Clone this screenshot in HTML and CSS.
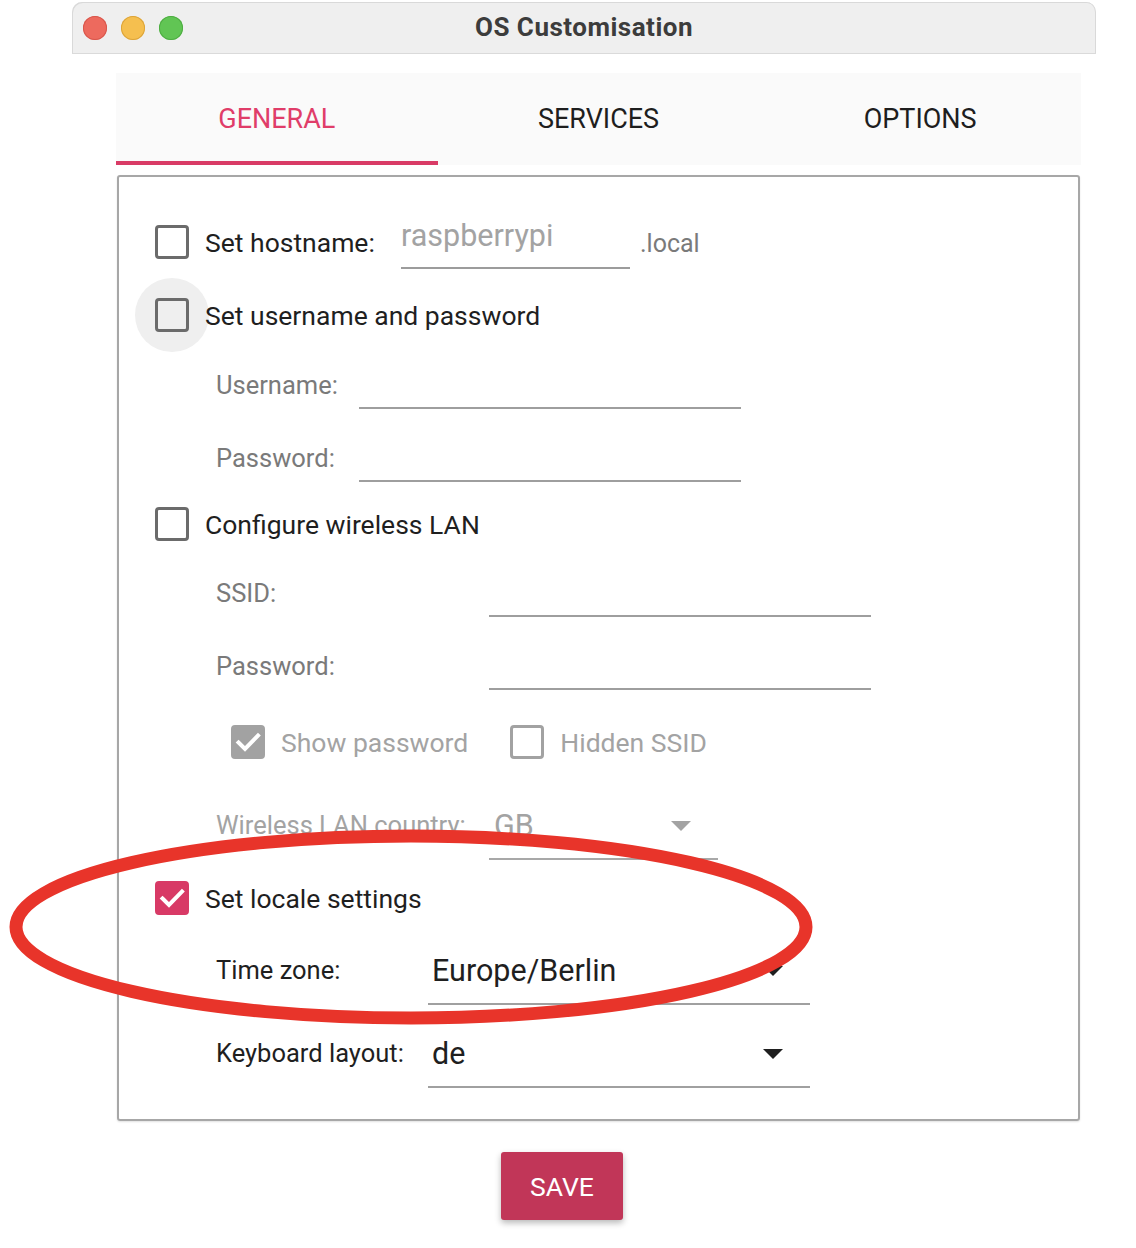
FILE: index.html
```html
<!DOCTYPE html>
<html lang="en">
<head>
<meta charset="utf-8">
<title>OS Customisation</title>
<link rel="stylesheet" href="styles.css">
</head>
<body>
<div class="window">
  <div class="titlebar">
    <div class="lights">
      <span class="light red"></span>
      <span class="light yellow"></span>
      <span class="light green"></span>
    </div>
    <div class="title">OS Customisation</div>
    <div class="spacer"></div>
  </div>

  <div class="content">
    <div class="tabs">
      <div class="tab active">GENERAL</div>
      <div class="tab">SERVICES</div>
      <div class="tab">OPTIONS</div>
    </div>

    <div class="panel">
      <div class="row host-row">
        <span class="cb"></span>
        <span class="cb-label host-label">Set hostname:</span>
        <span class="host-input"><span class="placeholder">raspberrypi</span></span>
        <span class="suffix">.local</span>
      </div>

      <div class="row check-row user-check">
        <span class="ripple"><span class="cb"></span></span>
        <span class="cb-label">Set username and password</span>
      </div>

      <div class="row field-row user-group">
        <span class="field-label">Username:</span>
        <span class="text-field wide"></span>
      </div>
      <div class="row field-row user-group">
        <span class="field-label">Password:</span>
        <span class="text-field wide"></span>
      </div>

      <div class="row check-row wifi-check">
        <span class="cb"></span>
        <span class="cb-label">Configure wireless LAN</span>
      </div>

      <div class="row field-row wifi-group">
        <span class="field-label">SSID:</span>
        <span class="text-field wide"></span>
      </div>
      <div class="row field-row wifi-group">
        <span class="field-label">Password:</span>
        <span class="text-field wide"></span>
      </div>

      <div class="row options-row">
        <span class="cb checked disabled">
          <svg viewBox="0 0 34 34" class="tick"><polyline points="7.5,17.5 14,24 27,10.5"/></svg>
        </span>
        <span class="opt-label">Show password</span>
        <span class="cb disabled-empty"></span>
        <span class="opt-label">Hidden SSID</span>
      </div>

      <div class="row combo-row wifi-group disabled-row">
        <span class="field-label">Wireless LAN country:</span>
        <span class="combo narrow">
          <span class="combo-value">GB</span>
          <span class="arrow"></span>
        </span>
      </div>

      <div class="row check-row locale-check">
        <span class="cb checked">
          <svg viewBox="0 0 34 34" class="tick"><polyline points="7.5,17.5 14,24 27,10.5"/></svg>
        </span>
        <span class="cb-label">Set locale settings</span>
      </div>

      <div class="row combo-row locale-group">
        <span class="field-label dark">Time zone:</span>
        <span class="combo wide">
          <span class="combo-value">Europe/Berlin</span>
          <span class="arrow"></span>
        </span>
      </div>
      <div class="row combo-row locale-group">
        <span class="field-label dark">Keyboard layout:</span>
        <span class="combo wide">
          <span class="combo-value">de</span>
          <span class="arrow"></span>
        </span>
      </div>
    </div>

    <div class="actions">
      <button class="save">SAVE</button>
    </div>
  </div>

  <svg class="annotation" viewBox="0 0 1136 1248" width="1136" height="1248">
    <ellipse cx="411" cy="927" rx="395" ry="91" />
  </svg>
</div>
</body>
</html>
```

FILE: styles.css
```css
* { box-sizing: border-box; }

html, body {
  margin: 0;
  padding: 0;
  background: #ffffff;
}

body {
  font-family: Roboto, "Liberation Sans", sans-serif;
  color: #212121;
  width: 1136px;
  height: 1248px;
  overflow: hidden;
  position: relative;
}

.window {
  margin: 2px 0 0 72px;
  width: 1024px;
}

/* Title bar */
.titlebar {
  height: 52px;
  background: #efefef;
  border-bottom: 1px solid #dadada;
  border-radius: 10px 10px 0 0;
  box-shadow: inset 1px 1px 0 #d9d9d9, inset -1px 0 0 #d9d9d9;
  display: grid;
  grid-template-columns: 1fr auto 1fr;
  align-items: center;
}

.lights {
  display: flex;
  gap: 14px;
  padding-left: 11px;
}

.light {
  width: 24px;
  height: 24px;
  border-radius: 50%;
  display: block;
}
.light.red { background: #ed6a5e; box-shadow: inset 0 0 0 1px #d8574c; }
.light.yellow { background: #f5bf4f; box-shadow: inset 0 0 0 1px #dca43a; }
.light.green { background: #61c554; box-shadow: inset 0 0 0 1px #4ead42; }

.title {
  font-family: Roboto, "Liberation Sans", sans-serif;
  font-weight: 700;
  font-size: 26px;
  color: #3c3c3c;
  letter-spacing: 0.5px;
  padding-bottom: 2px;
}

/* Content */
.content {
  padding: 19px 15px 0 44px;
}

.tabs {
  display: flex;
  height: 92px;
  background: #fafafa;
}

.tab {
  flex: 1;
  display: flex;
  align-items: center;
  justify-content: center;
  font-size: 27px;
  color: #1e1e1e;
  padding-top: 4px;
  border-bottom: 4px solid transparent;
}

.tab.active {
  color: #e03d69;
  border-bottom-color: #d93b66;
}

.panel {
  margin: 10px 1px 0 1px;
  border: 2px solid #a7a7a7;
  border-radius: 3px;
  box-shadow: 0 1px 2px rgba(0, 0, 0, 0.12);
  padding: 28px 0 24px 0;
}

.row {
  display: flex;
  align-items: center;
}

/* checkbox */
.cb {
  width: 34px;
  height: 34px;
  flex: 0 0 34px;
  border: 3.5px solid #6b6b6b;
  border-radius: 4px;
  display: flex;
  align-items: center;
  justify-content: center;
  background: #fff;
}

.cb.checked {
  background: #d83a66;
  border-color: #d83a66;
}

.cb.checked.disabled {
  background: #a2a2a2;
  border-color: #a2a2a2;
}

.cb.disabled-empty {
  border-color: #a2a2a2;
}

.tick {
  width: 34px;
  height: 34px;
  flex: 0 0 34px;
  margin: -3.5px;
}
.tick polyline {
  fill: none;
  stroke: #ffffff;
  stroke-width: 4;
  stroke-linecap: square;
}

.ripple {
  width: 74px;
  height: 74px;
  margin: -20px;
  border-radius: 50%;
  background: #efefef;
  display: flex;
  align-items: center;
  justify-content: center;
}
.ripple .cb { background: transparent; }

.cb-label {
  font-size: 26.5px;
  color: #1f1f1f;
  margin-left: 16px;
}

/* hostname */
.host-row {
  height: 74px;
  padding-left: 36px;
}

.host-label {
  width: 196px;
}

.host-input {
  align-self: flex-start;
  width: 229px;
  height: 64px;
  border-bottom: 2px solid #9c9c9c;
  display: flex;
  align-items: center;
  padding-bottom: 2px;
}

.placeholder {
  font-size: 30.5px;
  color: #a3a3a3;
}

.suffix {
  margin-left: 10px;
  font-size: 25px;
  color: #7a7a7a;
  padding-top: 3px;
}

/* check rows */
.check-row {
  padding-left: 36px;
}
.user-check { height: 72px; }
.wifi-check { height: 62px; padding-bottom: 8px; }
.locale-check { height: 62px; }

/* field rows */
.field-row {
  height: 73px;
  align-items: flex-start;
  padding-left: 97px;
}

.field-label {
  font-size: 25.5px;
  color: #7a7a7a;
  line-height: 68px;
  flex: 0 0 auto;
}

.user-group .field-label { width: 143px; }
.wifi-group .field-label { width: 273px; }
.locale-group .field-label { width: 212px; }

.field-label.dark { color: #1f1f1f; }

.text-field {
  height: 58px;
  border-bottom: 2px solid #9e9e9e;
  display: block;
}
.text-field.wide { width: 382px; }

/* options row */
.options-row {
  height: 79px;
  padding-bottom: 5px;
  padding-left: 112px;
}

.opt-label {
  font-size: 26.5px;
  color: #a3a3a3;
  margin-left: 16px;
  margin-right: 42px;
}

/* combo rows */
.combo-row {
  height: 83px;
  align-items: flex-start;
  padding-left: 97px;
}

.combo-row .field-label {
  line-height: 82px;
}

.combo {
  height: 76px;
  padding: 8px 27px 0 4px;
  border-bottom: 2px solid #a0a0a0;
  display: flex;
  align-items: center;
  justify-content: space-between;
}
.combo.wide { width: 382px; }
.combo.narrow { width: 229px; }

.combo-value {
  font-size: 30.5px;
  color: #1f1f1f;
}

.arrow {
  width: 0;
  height: 0;
  border-left: 10px solid transparent;
  border-right: 10px solid transparent;
  border-top: 10px solid #1f1f1f;
  margin-top: 2px;
}

.disabled-row .field-label,
.disabled-row .combo-value {
  color: #a3a3a3;
}
.disabled-row .arrow {
  border-top-color: #a3a3a3;
}
.disabled-row .combo {
  padding-left: 5px;
  border-bottom-color: #a8a8a8;
}

/* save */
.actions {
  display: flex;
  justify-content: center;
  padding-top: 31px;
  padding-right: 73px;
}

.save {
  width: 122px;
  height: 68px;
  border: none;
  border-radius: 3px;
  background: #c13658;
  color: #ffffff;
  font-family: Roboto, "Liberation Sans", sans-serif;
  font-size: 26.5px;
  box-shadow: 0 3px 6px rgba(0, 0, 0, 0.28);
}

/* red hand-drawn annotation */
.annotation {
  position: absolute;
  left: 0;
  top: 0;
  pointer-events: none;
}
.annotation ellipse {
  fill: none;
  stroke: #e8342a;
  stroke-width: 13;
}
```
